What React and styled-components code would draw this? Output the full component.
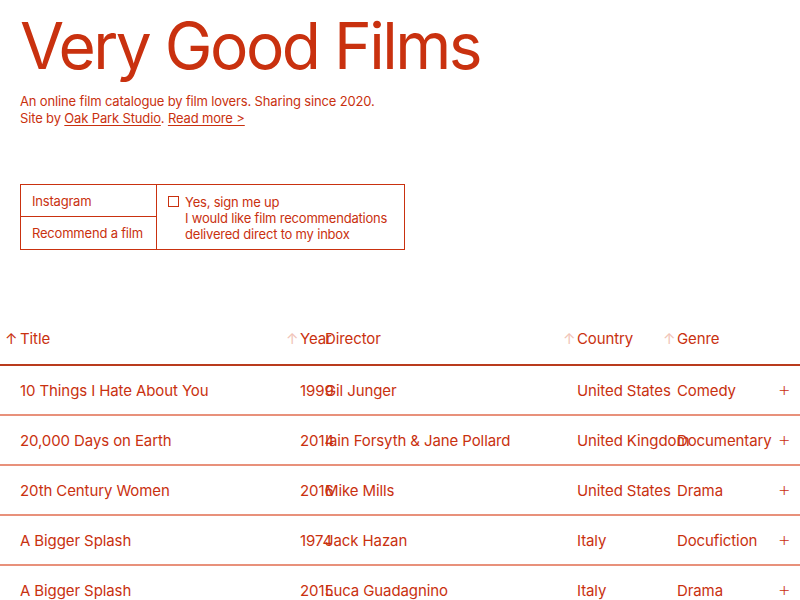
import React from 'react';
import styled, { createGlobalStyle } from 'styled-components';

const red = '#c9310f';

const GlobalStyle = createGlobalStyle`
  body {
    margin: 0;
    background: #fff;
    color: ${red};
    font-family: Inter, "Liberation Sans", sans-serif;
  }
`;

const Page = styled.div`
  width: 800px;
  overflow: hidden;
`;

const Header = styled.header`
  padding: 10px 20px 0;
`;

const Title = styled.h1`
  margin: 0;
  font-size: 64px;
  font-weight: 400;
  letter-spacing: -2.5px;
  line-height: 72px;
`;

const Intro = styled.p`
  margin: 11px 0 0;
  font-size: 13px;
  letter-spacing: -0.15px;
  line-height: 17px;
  a {
    color: inherit;
    text-decoration: underline;
    text-underline-offset: 2px;
  }
`;

const Box = styled.div`
  margin: 57px 0 0 20px;
  width: 383px;
  display: grid;
  grid-template-columns: 136px 1fr;
  border: 1px solid ${red};
  font-size: 13px;
  letter-spacing: -0.2px;
`;

const LinkList = styled.div`
  display: flex;
  flex-direction: column;
  border-right: 1px solid ${red};
`;

const BoxLink = styled.div`
  height: 31px;
  padding: 0 11px;
  display: flex;
  align-items: center;
  white-space: nowrap;
  & + & {
    height: 32px;
    border-top: 1px solid ${red};
  }
`;

const Signup = styled.label`
  display: flex;
  gap: 6px;
  padding: 9px 11px 6px;
  line-height: 16px;
  white-space: nowrap;
`;

const Check = styled.span`
  width: 9px;
  height: 9px;
  margin-top: 2px;
  border: 1px solid ${red};
  flex: none;
`;

const Table = styled.div`
  margin-top: 64px;
`;

const Row = styled.div`
  display: grid;
  grid-template-columns: 300px 25px 252px 100px 100px 1fr;
  height: ${p => (p.head ? 52 : 50)}px;
  align-items: center;
  border-bottom: 2px solid ${p => (p.head ? '#b93b1d' : '#e8917b')};
  font-size: 15px;
  letter-spacing: -0.1px;
  box-sizing: border-box;
  padding-bottom: ${p => (p.head ? 2 : 0)}px;
`;

const Cell = styled.div`
  position: relative;
  white-space: nowrap;
  padding-left: ${p => (p.first ? 20 : 0)}px;
`;

const Arrow = styled.span`
  position: absolute;
  left: ${p => (p.first ? 5 : -14)}px;
  top: 0;
  color: ${p => (p.active ? red : '#f1c4b8')};
`;

const Plus = styled.div`
  text-align: right;
  padding: 0 9px 4px 0;
  font-size: 21px;
  font-weight: 200;
  line-height: 1;
`;

const films = [
  ['10 Things I Hate About You', '1999', 'Gil Junger', 'United States', 'Comedy'],
  ['20,000 Days on Earth', '2014', 'Iain Forsyth & Jane Pollard', 'United Kingdom', 'Documentary'],
  ['20th Century Women', '2016', 'Mike Mills', 'United States', 'Drama'],
  ['A Bigger Splash', '1974', 'Jack Hazan', 'Italy', 'Docufiction'],
  ['A Bigger Splash', '2015', 'Luca Guadagnino', 'Italy', 'Drama'],
];

export default function App() {
  return (
    <Page>
      <GlobalStyle />
      <Header>
        <Title>Very Good Films</Title>
        <Intro>
          An online film catalogue by film lovers. Sharing since 2020.
          <br />
          Site by <a>Oak Park Studio</a>. <a>Read more &gt;</a>
        </Intro>
      </Header>
      <Box>
        <LinkList>
          <BoxLink>Instagram</BoxLink>
          <BoxLink>Recommend a film</BoxLink>
        </LinkList>
        <Signup>
          <Check />
          <span>
            Yes, sign me up
            <br />
            I would like film recommendations
            <br />
            delivered direct to my inbox
          </span>
        </Signup>
      </Box>
      <Table>
        <Row head>
          <Cell first><Arrow first active>↑</Arrow>Title</Cell>
          <Cell><Arrow>↑</Arrow>Year</Cell>
          <Cell>Director</Cell>
          <Cell><Arrow>↑</Arrow>Country</Cell>
          <Cell><Arrow>↑</Arrow>Genre</Cell>
          <div />
        </Row>
        {films.map((f, i) => (
          <Row key={i}>
            <Cell first>{f[0]}</Cell>
            <Cell>{f[1]}</Cell>
            <Cell>{f[2]}</Cell>
            <Cell>{f[3]}</Cell>
            <Cell>{f[4]}</Cell>
            <Plus>+</Plus>
          </Row>
        ))}
      </Table>
    </Page>
  );
}
